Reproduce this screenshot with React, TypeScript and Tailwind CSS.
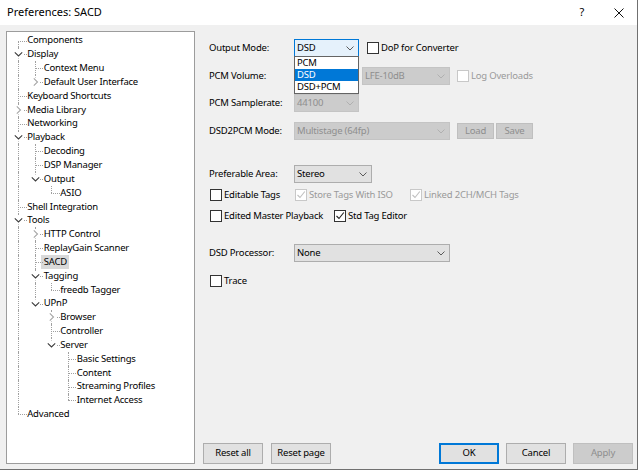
import type { FC, ReactNode } from "react";

type TreeNode = {
  label: string;
  children?: TreeNode[];
  collapsed?: boolean;
  selected?: boolean;
};

type TreeRow = {
  node: TreeNode;
  depth: number;
  guides: boolean[];
  first: boolean;
  last: boolean;
};

const tree: TreeNode[] = [
  { label: "Components" },
  {
    label: "Display",
    children: [
      { label: "Context Menu" },
      { label: "Default User Interface", collapsed: true },
    ],
  },
  { label: "Keyboard Shortcuts" },
  { label: "Media Library", collapsed: true },
  { label: "Networking" },
  {
    label: "Playback",
    children: [
      { label: "Decoding" },
      { label: "DSP Manager" },
      { label: "Output", children: [{ label: "ASIO" }] },
    ],
  },
  { label: "Shell Integration" },
  {
    label: "Tools",
    children: [
      { label: "HTTP Control", collapsed: true },
      { label: "ReplayGain Scanner" },
      { label: "SACD", selected: true },
      { label: "Tagging", children: [{ label: "freedb Tagger" }] },
      {
        label: "UPnP",
        children: [
          { label: "Browser", collapsed: true },
          { label: "Controller" },
          {
            label: "Server",
            children: [
              { label: "Basic Settings" },
              { label: "Content" },
              { label: "Streaming Profiles" },
              { label: "Internet Access" },
            ],
          },
        ],
      },
    ],
  },
  { label: "Advanced" },
];

const flatten = (nodes: TreeNode[], depth: number, guides: boolean[], out: TreeRow[]) => {
  nodes.forEach((node, i) => {
    const last = i === nodes.length - 1;
    out.push({ node, depth, guides, first: depth === 0 && i === 0, last });
    if (node.children) flatten(node.children, depth + 1, [...guides, !last], out);
  });
  return out;
};

const rows = flatten(tree, 0, [], []);

const Chevron: FC<{ open: boolean }> = ({ open }) => (
  <span className="absolute left-[4px] top-1/2 flex h-[9px] w-[9px] -translate-y-1/2 items-center justify-center bg-white">
    {open ? (
      <svg width="9" height="9" viewBox="0 0 9 9">
        <path d="M0.8 2.8 L4.5 6.5 L8.2 2.8" fill="none" stroke="#3c3c3c" strokeWidth="1.1" />
      </svg>
    ) : (
      <svg width="9" height="9" viewBox="0 0 9 9">
        <path d="M2.8 0.8 L6.5 4.5 L2.8 8.2" fill="none" stroke="#a6a6a6" strokeWidth="1.1" />
      </svg>
    )}
  </span>
);

const TreeLine: FC<{ row: TreeRow }> = ({ row }) => {
  const { node } = row;
  const expandable = !!node.children || !!node.collapsed;
  return (
    <div className="flex h-[13.85px] items-center">
      {row.guides.map((g, i) => (
        <div key={i} className="relative h-full w-[16.5px] shrink-0">
          {g && <div className="absolute bottom-0 left-[8px] top-0 border-l border-dotted border-[#a0a0a0]" />}
        </div>
      ))}
      <div className="relative h-full w-[16.5px] shrink-0">
        <div
          className={`absolute left-[8px] border-l border-dotted border-[#a0a0a0] ${row.first ? "top-1/2" : "top-0"} ${row.last ? "bottom-1/2" : "bottom-0"}`}
        />
        <div className="absolute left-[8px] right-0 top-1/2 border-t border-dotted border-[#a0a0a0]" />
        {expandable && <Chevron open={!!node.children} />}
      </div>
      {node.selected ? (
        <span className="-ml-[2px] flex h-full items-center whitespace-nowrap bg-[#d9d9d9] pl-[2.5px] pr-[2px]">
          {node.label}
        </span>
      ) : (
        <span className="ml-[0.5px] whitespace-nowrap">{node.label}</span>
      )}
    </div>
  );
};

type ComboState = "focus" | "enabled" | "disabled";

const Combo: FC<{ w: string; text?: string; state: ComboState; children?: ReactNode }> = ({
  w,
  text,
  state,
  children,
}) => {
  const look =
    state === "focus"
      ? "border-[#0078d7] bg-[#e5f1fb] text-black"
      : state === "enabled"
        ? "border-[#adadad] bg-[#e1e1e1] text-black"
        : "border-[#c4c4c4] bg-[#cccccc] text-[#8e8e8e]";
  return (
    <div className={`relative flex h-[18px] shrink-0 items-center justify-between border pl-[2px] pr-[4px] ${w} ${look}`}>
      <span className="whitespace-nowrap">{text}</span>
      <svg width="8" height="5" viewBox="0 0 8 5">
        <path
          d="M0.5 0.5 L4 4 L7.5 0.5"
          fill="none"
          stroke={state === "disabled" ? "#b0b0b0" : "#5a5a5a"}
          strokeWidth="1"
        />
      </svg>
      {children}
    </div>
  );
};

const Check: FC<{ label: string; checked?: boolean; disabled?: boolean }> = ({ label, checked, disabled }) => (
  <div className="flex h-[12px] items-center gap-[2px]">
    <span
      className={`flex h-[12px] w-[12px] shrink-0 items-center justify-center border bg-white ${disabled ? "border-[#c8c8c8]" : "border-[#333333]"}`}
    >
      {checked && (
        <svg width="10" height="10" viewBox="0 0 10 10">
          <path
            d="M1.5 5 L4 7.5 L8.8 1.5"
            fill="none"
            stroke={disabled ? "#c0c0c0" : "#222222"}
            strokeWidth="1.1"
          />
        </svg>
      )}
    </span>
    <span className={`whitespace-nowrap ${disabled ? "text-[#9a9a9a]" : "text-black"}`}>{label}</span>
  </div>
);

const Button: FC<{ label: string; kind?: "default" | "focus" | "disabled"; size?: "big" | "small" }> = ({
  label,
  kind = "default",
  size = "big",
}) => {
  const look =
    kind === "focus"
      ? "border-[#0078d7] bg-[#e1e1e1] text-black shadow-[inset_0_0_0_1px_#0078d7]"
      : kind === "disabled"
        ? "border-[#bfbfbf] bg-[#cccccc] text-[#8e8e8e]"
        : "border-[#adadad] bg-[#e1e1e1] text-black";
  const dims = size === "big" ? "h-[21px] w-[60px]" : "h-[16px] w-[37px]";
  return <div className={`flex shrink-0 items-center justify-center border ${dims} ${look}`}>{label}</div>;
};

export default function App() {
  return (
    <div className="flex h-[471px] w-[640px] flex-col overflow-hidden bg-white font-['Noto_Sans',sans-serif] text-[9.5px] tracking-[-0.2px] text-black">
      <div className="flex h-[470px] w-[638px] flex-col border-b border-r border-[#707070]">
        {/* title bar */}
        <div className="flex h-[25px] shrink-0 items-center bg-white pl-[7px] text-[11px] tracking-normal">
          <span>Preferences: SACD</span>
          <span className="ml-auto w-[10px] text-center text-[11px]">?</span>
          <span className="ml-[27px] mr-[13px] flex h-[10px] w-[10px] items-center justify-center">
            <svg width="10" height="10" viewBox="0 0 10 10">
              <path d="M0.5 0.5 L9.5 9.5 M9.5 0.5 L0.5 9.5" stroke="#111111" strokeWidth="1" />
            </svg>
          </span>
        </div>

        <div className="flex flex-1 bg-[#f0f0f0] pb-[5px]">
          {/* tree */}
          <div className="ml-[6px] mt-[6px] w-[189px] shrink-0 border border-[#9c9c9c] bg-white pl-[3.25px] pt-[1.6px]">
            {rows.map((row, i) => (
              <TreeLine key={i} row={row} />
            ))}
          </div>

          {/* settings */}
          <div className="flex flex-1 flex-col">
            <div className="flex flex-1 flex-col pl-[14px] pt-[14px]">
              <div className="flex items-center">
                <span className="w-[85px]">Output Mode:</span>
                <Combo w="w-[65px]" text="DSD" state="focus">
                  <div className="absolute left-[-1px] top-[16px] z-10 flex w-[65px] flex-col border border-[#646464] bg-white">
                    <span className="flex h-[12px] items-center pl-[2px]">PCM</span>
                    <span className="flex h-[12px] items-center bg-[#0078d7] pl-[2px] text-white">DSD</span>
                    <span className="flex h-[12px] items-center pl-[2px]">DSD+PCM</span>
                  </div>
                </Combo>
                <div className="ml-[8px]">
                  <Check label="DoP for Converter" />
                </div>
              </div>

              <div className="mt-[10px] flex items-center">
                <span className="w-[85px]">PCM Volume:</span>
                <Combo w="w-[65px]" state="disabled" />
                <div className="ml-[3px]">
                  <Combo w="w-[88px]" text="LFE-10dB" state="disabled" />
                </div>
                <div className="ml-[7px]">
                  <Check label="Log Overloads" disabled />
                </div>
              </div>

              <div className="mt-[9px] flex items-center">
                <span className="w-[85px]">PCM Samplerate:</span>
                <Combo w="w-[65px]" text="44100" state="disabled" />
              </div>

              <div className="mt-[10px] flex items-center">
                <span className="w-[85px]">DSD2PCM Mode:</span>
                <Combo w="w-[156px]" text="Multistage (64fp)" state="disabled" />
                <div className="ml-[7px] flex gap-[2px]">
                  <Button label="Load" kind="disabled" size="small" />
                  <Button label="Save" kind="disabled" size="small" />
                </div>
              </div>

              <div className="mt-[25px] flex items-center">
                <span className="w-[85px]">Preferable Area:</span>
                <Combo w="w-[78px]" text="Stereo" state="enabled" />
              </div>

              <div className="mt-[6px] flex items-center pl-[1px]">
                <div className="w-[85px]">
                  <Check label="Editable Tags" />
                </div>
                <div className="w-[115px]">
                  <Check label="Store Tags With ISO" checked disabled />
                </div>
                <Check label="Linked 2CH/MCH Tags" checked disabled />
              </div>

              <div className="mt-[9px] flex items-center pl-[1px]">
                <div className="w-[124px]">
                  <Check label="Edited Master Playback" />
                </div>
                <Check label="Std Tag Editor" checked />
              </div>

              <div className="mt-[22px] flex items-center">
                <span className="w-[85px]">DSD Processor:</span>
                <Combo w="w-[156px]" text="None" state="enabled" />
              </div>

              <div className="mt-[13px] flex items-center pl-[1px]">
                <Check label="Trace" />
              </div>
            </div>

            <div className="flex items-center pl-[8px] pr-[4px]">
              <div className="flex gap-[8px]">
                <Button label="Reset all" />
                <Button label="Reset page" />
              </div>
              <div className="ml-auto flex gap-[7px]">
                <Button label="OK" kind="focus" />
                <Button label="Cancel" />
                <Button label="Apply" kind="disabled" />
              </div>
            </div>
          </div>
        </div>
      </div>
    </div>
  );
}
